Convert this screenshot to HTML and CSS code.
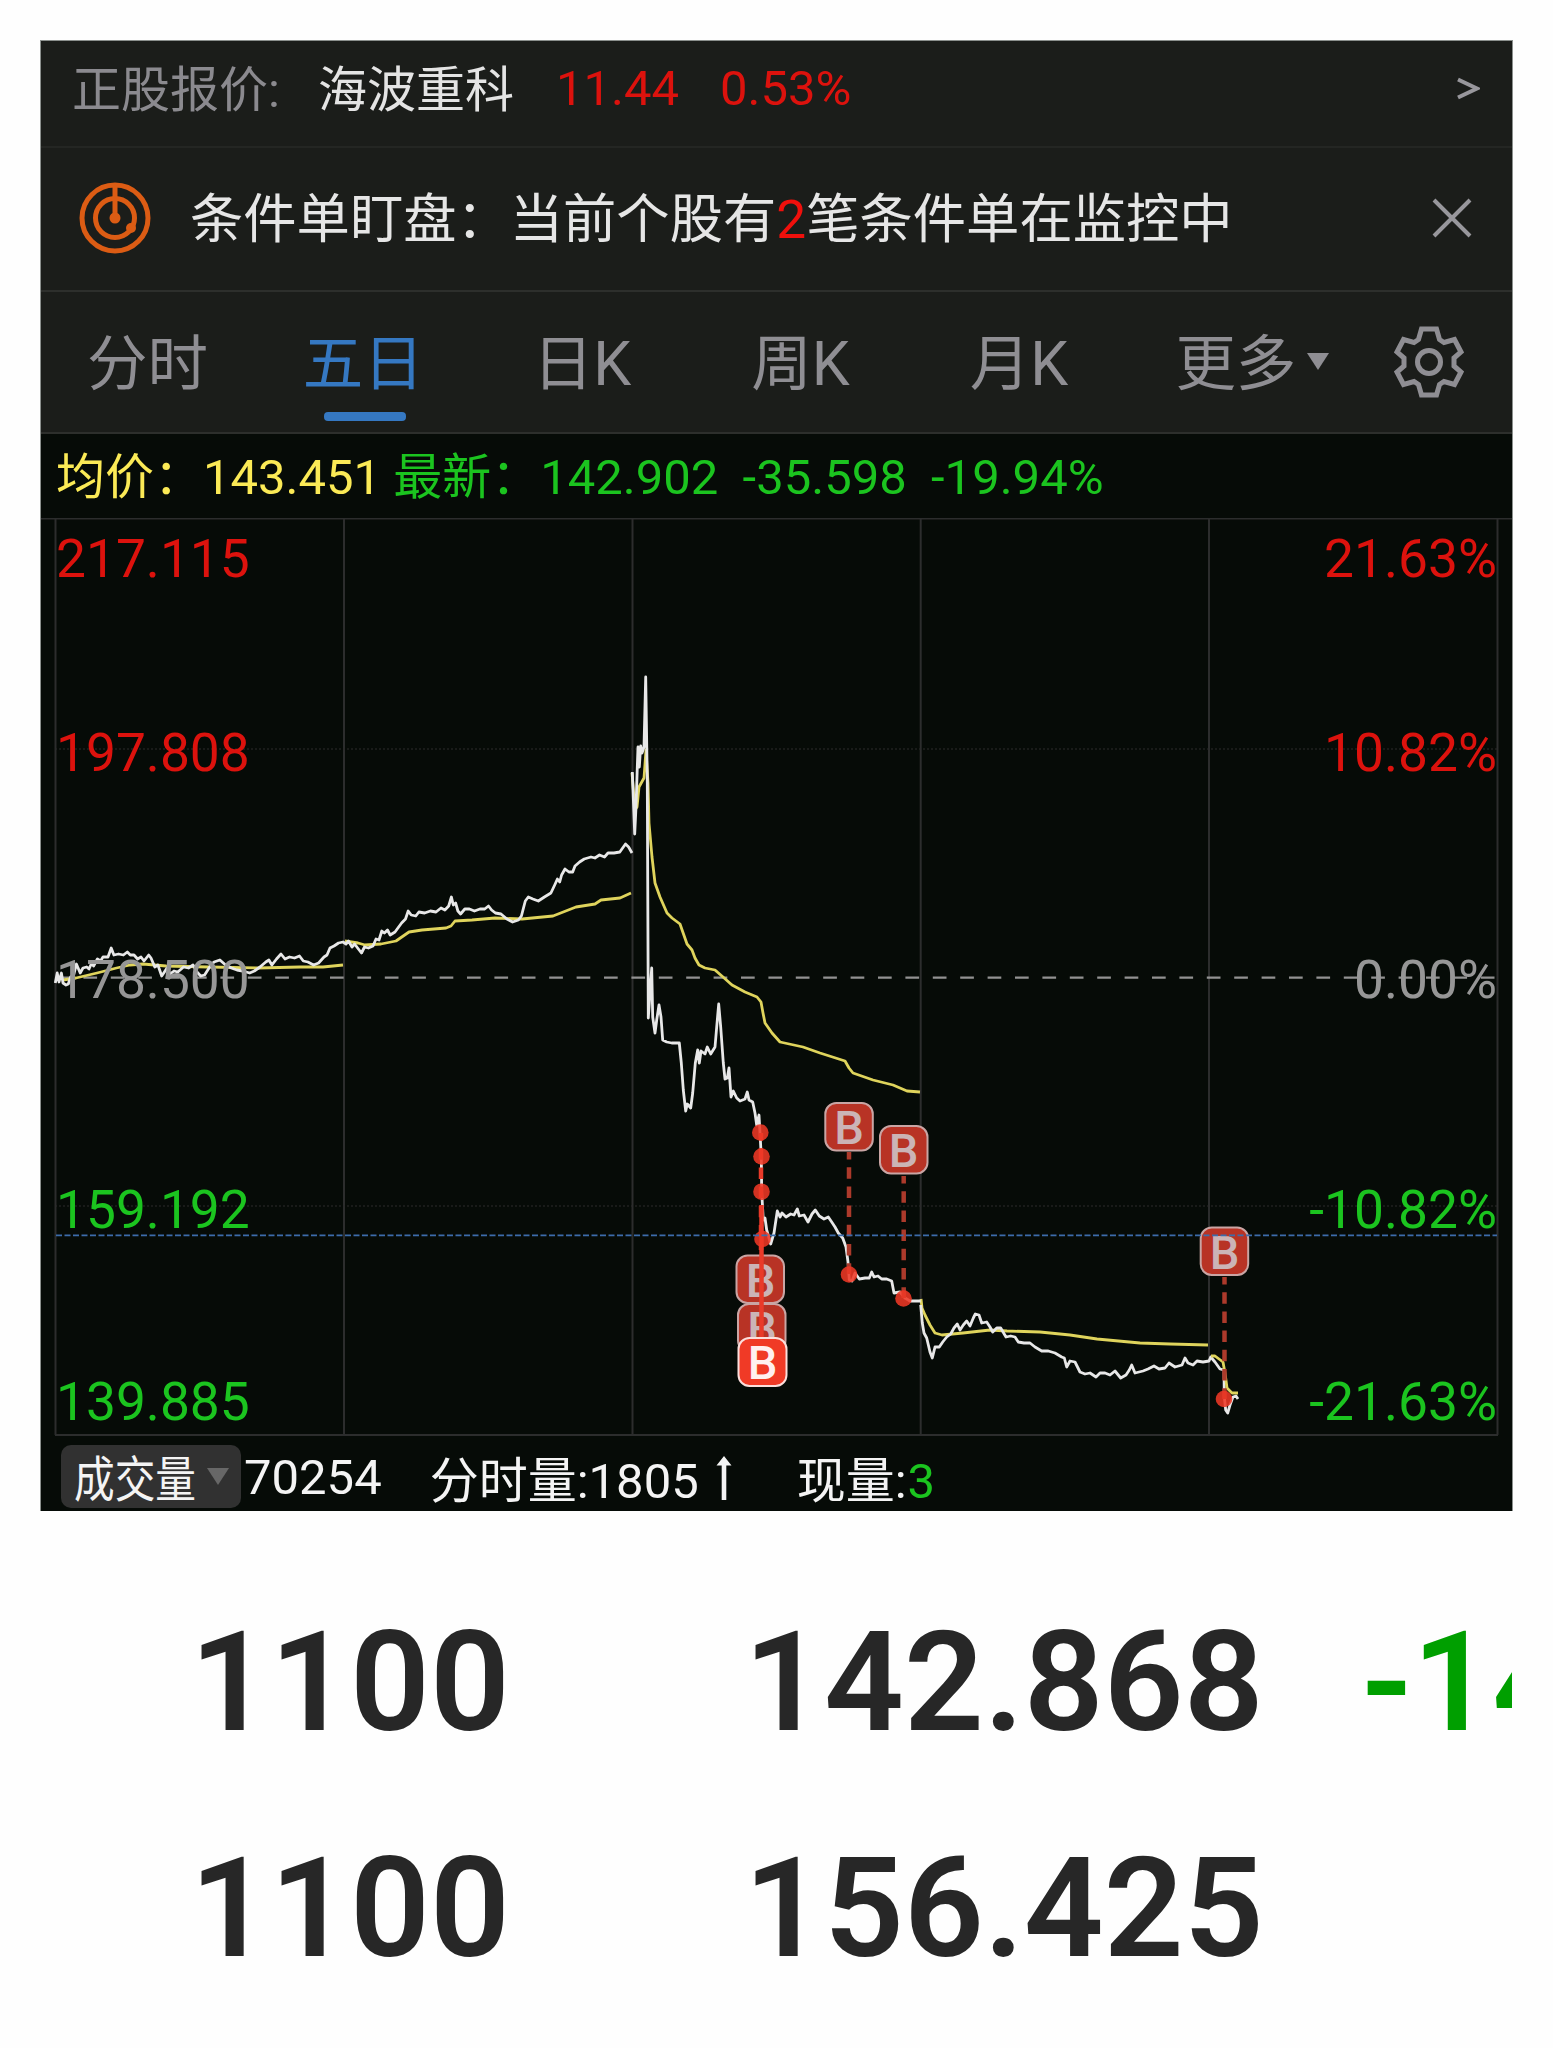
FILE: index.html
```
<!DOCTYPE html>
<html lang="zh-CN">
<head>
    <meta charset="UTF-8">
    <meta name="viewport" content="width=device-width, initial-scale=1.0">
    <title>五日</title>
    <link rel="stylesheet" href="styles.css">
</head>
<body>
    <div class="panel">
        <div class="stock-row">
            <span class="stock-label">正股报价:</span>
            <span class="stock-name">海波重科</span>
            <span class="stock-price">11.44</span>
            <span class="stock-change">0.53%</span>
            <svg class="arrow-right" width="24" height="24" viewBox="0 0 24 24"><path d="M2 2.500L21 11.500L2 20.500"/></svg>
        </div>

        <div class="notice-row">
            <svg class="radar" width="72" height="72" viewBox="0 0 72 72">
                <circle cx="36" cy="36" r="33"/>
                <circle cx="36" cy="36" r="19.500"/>
                <path d="M36 4V36"/>
                <circle class="dot" cx="36" cy="36" r="5.500"/>
                <circle class="dot" cx="52" cy="46" r="5"/>
            </svg>
            <span class="notice-text">条件单盯盘：当前个股有<b>2</b>笔条件单在监控中</span>
            <svg class="close" width="42" height="42" viewBox="0 0 42 42"><path d="M3 3L39 39M39 3L3 39"/></svg>
        </div>

        <div class="tabs">
            <span class="tab">分时</span>
            <span class="tab active">五日</span>
            <span class="tab">日K</span>
            <span class="tab">周K</span>
            <span class="tab">月K</span>
            <span class="tab more">更多<i class="caret"></i></span>
            <svg class="gear" width="74" height="74" viewBox="-37 -37 74 74">
                <path d="M-7.500 -33H7.500L10.500 -22.500L15 -19.500L25.500 -22.500L32 -10L25 -4V4L32 10L25.500 22.500L15 19.500L10.500 22.500L7.500 33H-7.500L-10.500 22.500L-15 19.500L-25.500 22.500L-32 10L-25 4V-4L-32 -10L-25.500 -22.500L-15 -19.500L-10.500 -22.500Z"/>
                <circle r="11.500"/>
            </svg>
        </div>

        <div class="info">
            <span class="avg">均价：143.451</span>
            <span class="last">最新：142.902&nbsp; -35.598&nbsp; -19.94%</span>
        </div>

        <svg class="chart" width="1471" height="918" viewBox="41 518 1471 918">
            <!-- grid -->
            <g class="grid">
                <path d="M55.500 519V1435M344 519V1435M632.500 519V1435M920.700 519V1435M1209 519V1435M1497.500 519V1435"/>
                <path class="frame" d="M41 518.500H1512M55 1435H1498"/>
                <path class="dots" d="M55 749H1497M55 1206H1497"/>
            </g>
            <path class="zero" d="M56 977.700H1497"/>

            <!-- average price, one line per day -->
            <g class="line-avg">
                <polyline points="63,980 76,978 97,973 116.500,968 130,965 143,964 166,966 208,967 258,968 300,967 323,967 343,965"/>
                <polyline points="345,941 358,943 365,945 381,944 396,941 409,932 422,930 446,928 451,926 455,921 472,920 495,918 522,919 553,916 576,907 595,904 601,900 620,898 631,893"/>
                <polyline points="632,773 635,810 637,807 639,787 644,778 646,750 648,783 649,823 652,857 655,883 660,897 667,913 672,918 680,924 687,944 692,950 695,958 699,965 705,968 715,970 723,977 732,985 745,992 757,997 761,1002 763,1013 765,1023 772,1033 780,1042 803,1047 820,1053 845,1061 849,1068 853,1073 873,1080 893,1085 907,1091 920,1092"/>
                <polyline points="921,1299 922,1308 925,1315 930,1325 935,1333 942,1335 963,1333 990,1330 1007,1331 1040,1332 1070,1335 1097,1339 1140,1343 1170,1344 1208,1345"/>
            </g>

            <!-- price -->
            <g class="line-price">
                <polyline points="55.300,983 57.200,973 59,982 61.400,973 63,983 66,985 68.300,984 70.600,977 73.700,975 76.400,964 80.200,973 83,968 86.700,967 89,969 91.700,963 93.600,966 97.400,959 100.500,961 103,957 108,957 111.200,948 113.900,955 118.500,954 123.400,955 127.300,952 130.300,955 134,955 137.600,959 141,957 144,961 148.700,955 151,958 154.800,967 157.900,965 161.700,976 164.400,972 167,968 170,974 174,971 177.800,972 183.500,967 188.500,968 193,965 197,972 200.700,976 204.600,975 210.300,966 214,962 219.900,960 225.600,965 231.300,968 237,970 242.800,971 249.700,973 254.300,971 260,967 265.800,962 268.900,960 271.900,965 276.500,959 281,954 285,959 289.500,957 294.500,958 299.500,956 303.300,961 307.900,962 313.600,965 318.600,963 324,957 327,955 330,948 334,946 338.500,943 343,942 346,944 348.500,941 352,947 354.600,944 358.400,949 361.500,953 364.500,947 368.400,948 373,946 376,939 379,940 381.800,931 384.400,933 387.500,930 390.200,935 395,932 401.600,923 405.500,919 408.200,911 411.200,915 415.800,916 418.900,912 424.600,913 430.400,911 436,912 441,908 444.900,910 448.700,906 451.400,897 453.300,905 455.600,903 457.900,911 460.600,914 464.800,909 469.400,909 474.400,911 480,909 484.700,909 488.500,906 491.600,910 495.400,913 501,914 506.900,919 512.600,922 518.400,920 521.400,916 525.300,901 528.300,897 532.900,899 538.300,901 544.400,897 550.900,893 554.700,885 557.400,879 559.700,882 561.600,875 565,869 568.900,872 572.700,872 575,866 579.600,862 584.200,859 591,857 594.900,858 599.500,855 604.500,857 608,853 614,853 619.800,852 625.500,844 628.600,847 632,853"/>
                <polyline points="632.300,772 634.700,834 636,807 637.300,767 638,747 639.300,767 640.700,746 642,753 644,747 645.700,677 647.300,783 648.300,1018 650,993 651.700,968 652.700,1017 655,1033 656.700,1020 659,1005 661,1017 662.700,1040 666.700,1042 671.700,1043 679.300,1043 681.300,1063 683.300,1090 685.700,1111 687.300,1104 690.700,1108 692.700,1093 695.300,1063 697.700,1050 699.300,1063 701,1051 705,1054 707.300,1047 710.700,1054 715,1047 716.700,1027 718.700,1004 720.700,1027 723.300,1063 725,1079 727.300,1078 729,1068 731,1097 733.300,1091 736.700,1098 740,1101 745,1099 747.300,1092 749,1100 752.700,1102 755,1113 756.700,1125 759,1115 760,1133 761.300,1157 761.700,1192 763.300,1220 765,1218 766.700,1230 770.700,1244 774,1233 777.300,1211 780,1217 782,1213 786,1217 790.700,1214 794,1215 797.300,1209 799.300,1216 804,1215 808,1222 812,1214 815.300,1210 819.300,1216 824,1219 828.300,1217 831.700,1222 835,1227 838.300,1233 842.700,1238 846,1247 848,1262 849.300,1280 852,1281 855,1273 859.300,1279 865,1278 869.300,1278 871.700,1272 874,1277 878,1276 881.700,1279 886.700,1279 891.700,1281 894,1293 900,1292 905,1298 910,1301 920.700,1301"/>
                <polyline points="920.700,1305 922.300,1323 924,1333 926.700,1338 930,1352 932.300,1358 935,1347 939.300,1347 942.700,1342 946.700,1337 950.700,1334 954,1328 957.300,1324 960,1330 963.300,1325 966.700,1321 970,1326 973.300,1318 975.300,1314 979,1315 981.700,1323 986.700,1322 990,1327 992.700,1332 996.700,1328 1000.700,1328 1006,1337 1010.700,1336 1015,1337 1018.300,1342 1024,1343 1030,1343 1035,1347 1041.700,1351 1048.300,1351 1055,1353 1061.700,1357 1064.300,1358 1066.700,1367 1070,1361 1075,1362 1080,1372 1085,1374 1090,1373 1096,1377 1100,1373 1105,1373 1110,1375 1115,1371 1120.700,1378 1126,1375 1129.300,1370 1131.700,1365 1135,1373 1143,1371 1148,1369 1154,1366 1159,1369 1165,1368 1169,1363 1175,1367 1182,1365 1185,1358 1188,1363 1193,1365 1197,1361 1203,1362 1209,1361 1210.700,1357 1215,1362 1220,1369 1224,1370 1224.300,1397 1225.700,1410 1227.700,1413 1230,1405 1233,1397 1236,1396 1238,1399"/>
            </g>
            <polyline class="line-avg" points="1211,1356 1215,1356 1223,1362 1225,1373 1227,1388 1232,1393 1238,1393"/>

            <!-- buy marks -->
            <g class="mark">
                <rect x="736.500" y="1255.500" width="47.500" height="47.500" rx="11"/>
                <text x="760.500" y="1297">B</text>
                <rect x="738" y="1304" width="47.500" height="47.500" rx="11"/>
                <text x="762" y="1345">B</text>
                <rect x="825.300" y="1103" width="47.500" height="47.500" rx="11"/>
                <text x="849" y="1144">B</text>
                <rect x="880" y="1126" width="47.500" height="47.500" rx="11"/>
                <text x="903.700" y="1167">B</text>
                <rect x="1200.700" y="1227.500" width="47.500" height="47.500" rx="11"/>
                <text x="1224.500" y="1268.500">B</text>
            </g>
            <g class="drop">
                <path d="M849 1152V1274M903.700 1176V1298M1224.500 1277V1399"/>
                <path class="near" d="M761 1133V1250"/>
                <path class="near solid" d="M761.500 1205V1337"/>
            </g>
            <g class="points">
                <circle cx="760.300" cy="1132.500" r="8.300"/>
                <circle cx="761.500" cy="1156.500" r="8.300"/>
                <circle cx="761.500" cy="1191.700" r="8.300"/>
                <circle cx="762.500" cy="1239" r="8.300"/>
                <circle cx="849" cy="1274.500" r="8.300"/>
                <circle cx="903.500" cy="1298.500" r="8.300"/>
                <circle cx="1224" cy="1399" r="8.300"/>
            </g>
            <g class="mark front">
                <rect x="738.500" y="1338" width="48" height="48" rx="11"/>
                <text x="762.500" y="1379">B</text>
            </g>
            <path class="cost" d="M56 1235.300H1497"/>

            <!-- scales -->
            <g class="scale">
                <text class="up" x="56" y="577">217.115</text>
                <text class="up" x="56" y="771">197.808</text>
                <text class="flat" x="56" y="998">178.500</text>
                <text class="down" x="56" y="1228">159.192</text>
                <text class="down" x="56" y="1420">139.885</text>
            </g>
            <g class="scale right">
                <text class="up" x="1497" y="577">21.63%</text>
                <text class="up" x="1497" y="771">10.82%</text>
                <text class="flat" x="1497" y="998">0.00%</text>
                <text class="down" x="1497" y="1228">-10.82%</text>
                <text class="down" x="1497" y="1420">-21.63%</text>
            </g>
        </svg>

        <div class="volume">
            <span class="picker"><span class="picker-text">成交量</span><i class="caret"></i></span>
            <span class="total">70254</span>
            <span class="minute">分时量:1805</span>
            <svg class="up-arrow" width="16" height="46" viewBox="0 0 16 46"><path d="M8 1L15.500 10.500H10.300V45H5.700V10.500H0.500Z"/></svg>
            <span class="current">现量:<b>3</b></span>
        </div>
    </div>

    <div class="orders">
        <div class="order">
            <span class="qty">1100</span>
            <span class="price">142.868</span>
            <span class="profit">-14</span>
        </div>
        <div class="order">
            <span class="qty">1100</span>
            <span class="price">156.425</span>
        </div>
    </div>
</body>
</html>
```
FILE: styles.css
```
* {
    box-sizing: border-box;
}
body {
    margin: 0;
    padding: 40px 0 0 40px;
    height: 2048px;
    overflow: hidden;
    background-color: #fefefe;
    font-family: Roboto, "Noto Sans CJK SC", sans-serif;
    font-size: 49px;
    white-space: nowrap;
}
b {
    font-weight: normal;
}
svg {
    display: block;
    flex: none;
}
.panel {
    width: 1473px;
    height: 1471px;
    border: 1px solid #8b908d;
    border-bottom: 0;
    background-color: #060b07;
    overflow: hidden;
}

/* top rows */
.stock-row {
    display: flex;
    align-items: center;
    height: 105px;
    padding: 0 32px 10px 31px;
    background-color: #1b1d1a;
    color: #e4e4e4;
}
.stock-label {
    color: #8b8a8f;
}
.stock-name {
    margin-left: 38px;
}
.stock-label, .stock-name {
    padding-bottom: 6px;
}
.stock-price, .stock-change {
    color: #dc120d;
}
.stock-price {
    margin-left: 42px;
}
.stock-change {
    margin-left: 41px;
}
.arrow-right {
    margin-left: auto;
}
.arrow-right path, .close path {
    fill: none;
    stroke: #98979c;
    stroke-width: 4;
}
.notice-row {
    display: flex;
    align-items: center;
    height: 144px;
    padding: 0 39px 3px 38px;
    border-top: 2px solid #242623;
    background-color: #1b1d1a;
    color: #e6e6e6;
    font-size: 53.300px;
}
.notice-text {
    margin-left: 39px;
    padding-bottom: 7px;
}
.notice-text b {
    color: #f0100c;
}
.radar {
    fill: none;
    stroke: #dc5c14;
    stroke-width: 5;
}
.radar .dot {
    fill: #dc5c14;
    stroke: none;
}
.close {
    margin-left: auto;
}

/* period tabs */
.tabs {
    display: grid;
    grid-template-columns: 213px repeat(4, 218.600px) 248px 1fr;
    align-items: center;
    height: 142px;
    border-top: 2px solid #2d2f2c;
    background-color: #1b1d1a;
    color: #8f8e93;
    font-size: 60.500px;
}
.tab {
    display: flex;
    justify-content: center;
    align-items: center;
    position: relative;
    height: 140px;
    padding-bottom: 8px;
}
.tab.active {
    color: #3578c2;
}
.tab.active::after {
    content: "";
    position: absolute;
    left: 70px;
    bottom: 11px;
    width: 82px;
    height: 9px;
    border-radius: 4px;
    background-color: #3578c2;
}
.caret {
    border: 11px solid transparent;
    border-top: 17px solid #8f8e93;
    border-bottom: 0;
}
.tab .caret {
    margin: 6px 0 0 11px;
}
.gear {
    margin-left: 16px;
    fill: none;
    stroke: #8f8e93;
    stroke-width: 5;
}

.info {
    display: flex;
    align-items: center;
    gap: 12px;
    height: 86px;
    padding: 0 0 8px 15px;
    border-top: 2px solid #2d2f2c;
}
.avg {
    color: #fbea56;
}
.last {
    color: #1bc41f;
}

/* chart */
.chart {
    fill: none;
}
.grid path {
    stroke: #2c2d2d;
    stroke-width: 2;
}
.grid .dots {
    stroke-width: 1;
    stroke-dasharray: 2 2;
}
.zero {
    stroke: #929292;
    stroke-width: 2.200;
    stroke-dasharray: 13.700 13.700;
}
.cost {
    stroke: #3c6cab;
    stroke-width: 1.700;
    stroke-dasharray: 6 2.500;
}
.line-avg {
    stroke: #dfd45c;
    stroke-width: 2.800;
    stroke-linejoin: round;
}
.line-price {
    stroke: #e8e8e8;
    stroke-width: 2.800;
    stroke-linejoin: round;
}
.mark rect {
    fill: #b83325;
    stroke: #c9a5a4;
    stroke-width: 2;
}
.mark text {
    fill: #cbb4b6;
    font-size: 47px;
    font-weight: 500;
    text-anchor: middle;
}
.mark.front rect {
    fill: #f03a26;
    stroke: #fbdedb;
}
.mark.front text {
    fill: #fff0f0;
}
.drop path {
    stroke: #ac3a2b;
    stroke-width: 4.500;
    stroke-dasharray: 11.500 7.700;
    stroke-dashoffset: 4;
}
.drop .near {
    stroke: #e93a29;
}
.drop .solid {
    stroke-dasharray: none;
}
.points {
    fill: #ee3826;
    fill-opacity: 0.88;
}
.scale {
    font-size: 53.300px;
}
.scale.right {
    text-anchor: end;
}
.up {
    fill: #dc120d;
}
.flat {
    fill: #969696;
}
.down {
    fill: #1bc41f;
}

/* volume bar */
.volume {
    display: flex;
    align-items: center;
    height: 76px;
    padding: 4px 0 0 20px;
    color: #f4f4f4;
}
.picker {
    display: flex;
    align-items: center;
    width: 180px;
    height: 63px;
    padding-left: 13px;
    border-radius: 10px;
    background-color: #313131;
}
.picker-text {
    width: 133px;
    padding-bottom: 2px;
    transform: scaleX(0.83);
    transform-origin: left;
}
.picker .caret {
    border-top-color: #676767;
}
.total {
    margin-left: 3px;
    padding-top: 3px;
}
.minute {
    margin-left: 48px;
}
.up-arrow {
    margin: 4px 0 0 17px;
    fill: #f4f4f4;
}
.current {
    margin-left: 65px;
}
.current b {
    margin-left: 1px;
    color: #1bc41f;
}

/* order list */
.orders {
    width: 1472px;
    padding-top: 58px;
    overflow: hidden;
    color: #272727;
    font-size: 140px;
    font-weight: 600;
}
.order {
    display: grid;
    grid-template-columns: 554px 617px 300px;
    align-items: center;
    height: 226px;
    padding-left: 150px;
}
.order .profit {
    color: #009f00;
}
```
